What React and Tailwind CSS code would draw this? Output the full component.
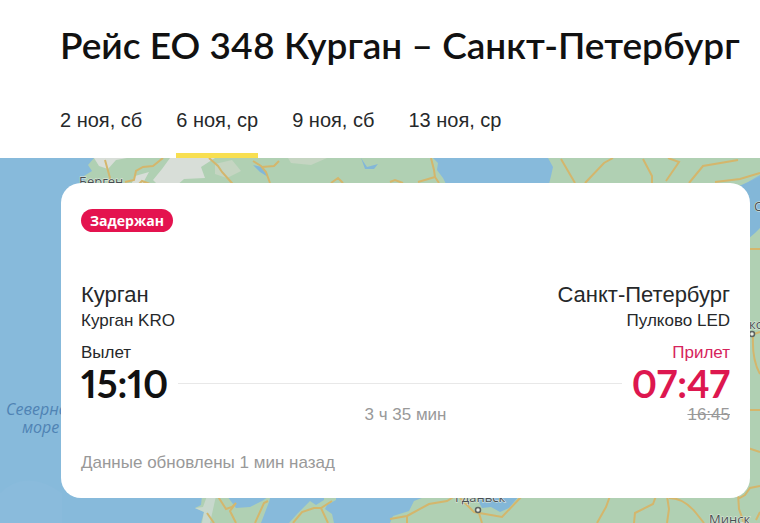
const dates = ['2 ноя, сб', '6 ноя, ср', '9 ноя, сб', '13 ноя, ср'];

function MapBackground() {
  return (
    <svg
      className="absolute inset-0 h-full w-full font-['Open_Sans','Noto_Sans',sans-serif]"
      viewBox="0 0 760 365"
      preserveAspectRatio="xMinYMin slice"
      aria-hidden="true"
    >
      <rect width="760" height="365" fill="#87badb" />
      <path d="M0 335Q26 310 62 335V365H0Z" fill="#8abbdc" />
      {/* Scandinavia */}
      <path d="M94 0L88 7 92 13 84 18 86 30H448L443 20 437 12 438 5 433 0Z" fill="#b0d0b3" />
      <path d="M94 0L99 8 108 11 116 2 127 0ZM170 0L162 11 153 22 161 30H174L184 21 205 20 201 9 215 0ZM135 18L149 14 143 25 130 29Z" fill="#d8ded8" />
      <path d="M215 6L232 2 241 13 227 20 215 16ZM288 0L327 0 311 7 291 5Z" fill="#c5d5c2" />
      <path d="M361 0L367 9 378 6 374 11 365 11ZM253 7L262 9 268 19 260 14Z" fill="#83b7d8" />
      {/* Finland, the Baltics and the mainland */}
      <path d="M548 0L553 9 551 18 548 30H735L748 24 760 17V0Z" fill="#b0d0b3" />
      <path d="M740 28L760 19V75L754 81 750 94 740 98Z" fill="#83b7d8" />
      <path d="M748 81L755 75 760 70V365H738V120Z" fill="#b0d0b3" />
      <path d="M201 365L204 354 195 350 201 347 202 338H227L236 350 250 349 262 343 271 337 269 344 261 365ZM289 365L298 355 310 343 316 347 324 342V335H336L336 342 327 347 325 351 332 356 334 365ZM390 365L393 358 409 353 414 343 432 336H760V365Z" fill="#b0d0b3" />
      <path d="M195 350L204 354 202 365H210L216 338H207L203 349Z" fill="#c8d8cd" />
      <path d="M475 337H520L509 350 500 354 491 349 482 350Z" fill="#83b7d8" />
      <g fill="none" stroke="#d4b66c" strokeWidth="2">
        <path d="M105 2L110 20 108 30M125 24L134 22 136 13 143 9 153 8 163 0M123 26L136 29 142 23 150 26M209 0L218 8 222 14 231 24 236 30M253 3L261 8 266 14 270 25M262 9L274 8 279 3M331 25L338 20 343 25M390 24L395 22 403 25M431 0L434 12 435 19 418 24M435 19L439 25" />
        <path d="M561 1L575 25M613 0L604 5 585 25M643 1L652 18V26M668 0L679 4 666 23M689 25L703 8 738 2M715 24L740 21 760 15" />
        <path d="M217 337L226 351 232 349 236 345 230 353 236 365M207 355L214 365M255 365L264 345 268 343M293 365L302 354 314 350H321L332 343M321 350L328 365M390 361L407 358V365M407 358L429 346 447 343 455 338M460 340L474 354 502 359 522 338M478 352L482 365M610 338L606 349 597 365M608 338H656L653 346 635 355 634 365M667 338L669 351 667 365M669 340Q684 340 696 355L704 365M738 336L739 351 744 365M738 341L745 337 750 330 760 328M756 362L760 354M748 91H760M754 176L760 174M753 179Q752 202 760 216M748 252H760M748 290L760 294" />
      </g>
      <g fill="#484f53" stroke="#e3eae0" strokeWidth="1" paintOrder="stroke" fontSize="13">
        <text x="79" y="28">Берген</text>
        <text x="754" y="53">Санкт</text>
        <text x="749" y="171">ков</text>
        <text x="455" y="344">Гданьск</text>
        <text x="709" y="366">Минск</text>
      </g>
      <g fill="#e8ece4" stroke="#5d6360" strokeWidth="1.5">
        <circle cx="478" cy="352" r="2.5" />
        <circle cx="752" cy="176" r="2.5" />
      </g>
      <g fill="#4f83b4" fontSize="16" fontStyle="italic">
        <text x="6" y="257">Северное</text>
        <text x="22" y="275">море</text>
      </g>
    </svg>
  );
}

export default function App() {
  return (
    <div className="flex min-h-screen flex-col bg-white font-['Liberation_Sans',sans-serif] text-[#26282a]">
      <header className="pl-[60px]">
        <h1 className="whitespace-nowrap pt-5 font-['Lato_Semibold',Lato,'Open_Sans',sans-serif] text-[37px] font-semibold proportional-nums leading-[50px] text-[#111]">
          Рейс ЕО 348 Курган – Санкт-Петербург
        </h1>
        <nav className="flex gap-[34px] pt-[26px] text-xl leading-[48px]">
          {dates.map((date, i) => (
            <a
              key={date}
              href="#"
              aria-current={i === 1 ? 'date' : undefined}
              className={`flex h-[62px] border-b-[5px] ${i === 1 ? 'border-[#f8df51]' : 'border-transparent'}`}
            >
              {date}
            </a>
          ))}
        </nav>
      </header>
      <main className="relative grow overflow-hidden pb-[25px] pl-[61px] pr-[10px] pt-[25px]">
        <MapBackground />
        <section className="relative rounded-[20px] bg-white px-5 pb-[23px] pt-[26px]">
          <div className="flex">
            <span className="rounded-full bg-[#e4134f] px-[9px] font-['Open_Sans','Noto_Sans',sans-serif] text-[14px] font-bold leading-[23px] text-white">
              Задержан
            </span>
          </div>
          <div className="mt-[49px] flex justify-between">
            <div>
              <h2 className="text-[22px] leading-7">Курган</h2>
              <p className="text-[17px] leading-6">Курган KRO</p>
            </div>
            <div className="text-right">
              <h2 className="text-[22px] leading-7">Санкт-Петербург</h2>
              <p className="text-[17px] leading-6">Пулково LED</p>
            </div>
          </div>
          <div className="mt-2 flex justify-between text-[17px] leading-6">
            <span>Вылет</span>
            <span className="text-[#d6245c]">Прилет</span>
          </div>
          <div className="mb-0.5 flex items-center gap-[10px] font-[Lato,'Open_Sans',sans-serif] text-[38px] font-bold proportional-nums leading-9">
            <time className="text-[#111]">15:10</time>
            <div className="h-px grow bg-[#e8e8e8]" />
            <time className="text-[#dd174f]">07:47</time>
          </div>
          <div className="grid grid-cols-[1fr_auto_1fr] text-[17px] leading-6 text-[#999]">
            <span className="col-start-2">3 ч 35 мин</span>
            <s className="text-right">16:45</s>
          </div>
          <p className="mt-6 text-[17px] leading-6 text-[#999]">Данные обновлены 1 мин назад</p>
        </section>
      </main>
    </div>
  );
}
